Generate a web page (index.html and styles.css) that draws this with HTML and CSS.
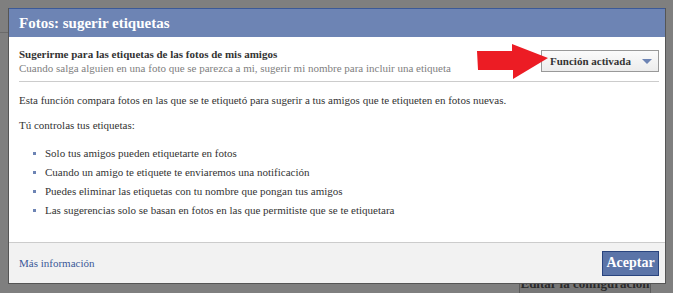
FILE: index.html
```html
<!DOCTYPE html>
<html lang="es">
<head>
    <meta charset="UTF-8">
    <title>Fotos: sugerir etiquetas</title>
    <link rel="stylesheet" href="styles.css">
</head>
<body>
    <div class="page">
        <div class="page-line"></div>
        <div class="page-edit">Editar la configuración</div>
    </div>

    <div class="dialog">
        <h2 class="dialog-title">Fotos: sugerir etiquetas</h2>
        <div class="dialog-body">
            <div class="setting-row">
                <div class="setting-text">
                    <div class="setting-name">Sugerirme para las etiquetas de las fotos de mis amigos</div>
                    <div class="setting-desc">Cuando salga alguien en una foto que se parezca a mi, sugerir mi nombre para incluir una etiqueta</div>
                </div>
                <button class="toggle">Función activada <span class="caret"></span></button>
                <svg class="arrow" width="72" height="36" viewBox="0 0 72 36">
                    <polygon points="0,7 35,7 35,0 71,14 36,35 36,26 1,26" fill="#ec1c24"/>
                </svg>
            </div>
            <p>Esta función compara fotos en las que se te etiquetó para sugerir a tus amigos que te etiqueten en fotos nuevas.</p>
            <p>Tú controlas tus etiquetas:</p>
            <ul class="rules">
                <li>Solo tus amigos pueden etiquetarte en fotos</li>
                <li>Cuando un amigo te etiquete te enviaremos una notificación</li>
                <li>Puedes eliminar las etiquetas con tu nombre que pongan tus amigos</li>
                <li>Las sugerencias solo se basan en fotos en las que permitiste que se te etiquetara</li>
            </ul>
        </div>
        <div class="dialog-footer">
            <a href="#" class="more">Más información</a>
            <button class="accept">Aceptar</button>
        </div>
    </div>
</body>
</html>
```

FILE: styles.css
```css
body {
    margin: 0;
    background: #7f7f7f;
    font-family: "Liberation Serif", serif;
    font-size: 11px;
    color: #333;
    overflow: hidden;
}

.page {
    height: 293px;
    position: relative;
}

.page-line {
    position: absolute;
    top: 32px;
    left: 0;
    width: 8px;
    border-top: 1px solid #6a6a6a;
}

/* button of the page behind the dialog, mostly covered */
.page-edit {
    position: absolute;
    left: 519px;
    top: 270px;
    width: 130px;
    height: 30px;
    border: 1px solid #5c5c5c;
    background: #777;
    color: #2a2a2a;
    font-weight: bold;
    font-size: 13px;
    text-align: center;
    line-height: 26px;
}

.dialog {
    position: absolute;
    top: 8px;
    left: 8px;
    width: 656px;
    background: #fff;
    border: 1px solid #555;
    border-top: none;
}

.dialog-title {
    margin: 0;
    height: 28px;
    padding: 0 10px;
    background: #6d84b4;
    border-top: 1px solid #3b5998;
    color: #fff;
    font-size: 15px;
    line-height: 28px;
}

.dialog-body {
    padding: 10px 6px 16px 10px;
    height: 179px;
}

.setting-row {
    display: flex;
    align-items: center;
    justify-content: space-between;
    border-bottom: 1px solid #ccc;
    padding-bottom: 6px;
    position: relative;
}

.setting-name {
    font-weight: bold;
    font-size: 11px;
    line-height: 14px;
}

.setting-desc {
    color: #808080;
    line-height: 14px;
}

.toggle {
    width: 118px;
    height: 22px;
    padding: 0 6px 0 8px;
    border: 1px solid #999;
    background: linear-gradient(#fbfbfb, #ececec);
    font-family: inherit;
    font-size: 11px;
    font-weight: bold;
    color: #333;
    display: flex;
    align-items: center;
    justify-content: space-between;
}

.caret {
    width: 0;
    height: 0;
    border-left: 5px solid transparent;
    border-right: 5px solid transparent;
    border-top: 5px solid #6d84b4;
}

.arrow {
    position: absolute;
    left: 458px;
    top: -3px;
}

p {
    margin: 11px 0 0;
    line-height: 14px;
}

.rules {
    list-style: none;
    margin: 14px 0 0;
    padding: 0 0 0 26px;
}

.rules li {
    position: relative;
    line-height: 14px;
    margin-bottom: 5px;
}

.rules li::before {
    content: "";
    position: absolute;
    left: -12px;
    top: 6px;
    width: 3px;
    height: 3px;
    background: #6d84b4;
}

.dialog-footer {
    background: #f2f2f2;
    border-top: 1px solid #ccc;
    height: 40px;
    padding: 0 6px 0 10px;
    display: flex;
    align-items: center;
    justify-content: space-between;
}

.more {
    color: #3b5998;
    text-decoration: none;
}

.accept {
    width: 57px;
    height: 25px;
    padding: 0;
    background: #5b74a8;
    border: 1px solid #29447e;
    color: #fff;
    font-family: inherit;
    font-size: 14px;
    font-weight: bold;
}
```
